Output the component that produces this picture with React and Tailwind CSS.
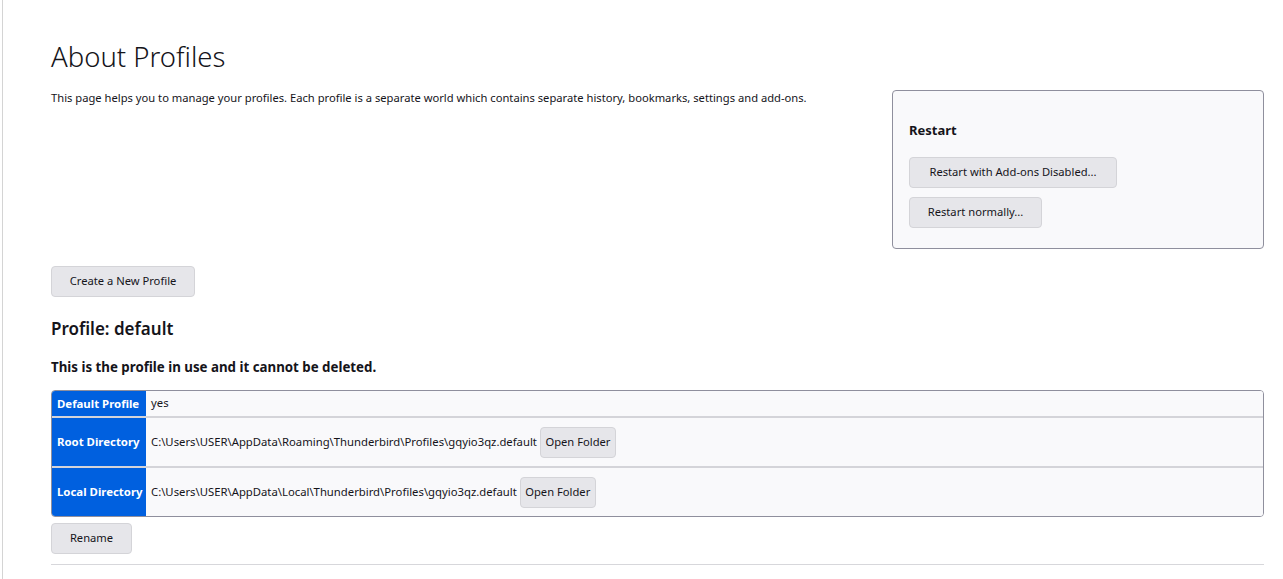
import React from "react";

const font = { fontFamily: '"Noto Sans", "Open Sans", sans-serif' };

function Btn({ children, className = "" }) {
  return (
    <button
      className={
        "flex items-center justify-center rounded-[4px] border border-[#d4d4d8] bg-[#e6e6ea] text-[11.2px] text-[#15141a] " +
        className
      }
    >
      {children}
    </button>
  );
}

function Row({ label, children, h }) {
  return (
    <div className={"flex " + h}>
      <div className="flex w-[94px] shrink-0 items-center bg-[#0060df] pl-[5px] text-[11.4px] font-bold text-white">
        {label}
      </div>
      <div className="flex flex-1 items-center bg-[#f9f9fb] pl-[5px] text-[11.3px] text-[#15141a]">
        {children}
      </div>
    </div>
  );
}

export default function App() {
  return (
    <div className="h-[579px] w-[1283px] overflow-hidden bg-white" style={font}>
      <div className="ml-[2px] h-full border-l border-[#d4d4d4] pl-[48px] pr-[19px] pt-[40px] text-[#15141a]">
        <h1 className="h-[34px] text-[27.5px] font-light leading-[34px]">About Profiles</h1>
        <div className="mt-[16px] flex items-start justify-between">
          <p className="text-[11.2px] leading-[16px]">
            This page helps you to manage your profiles. Each profile is a separate world which contains separate history, bookmarks, settings and add-ons.
          </p>
          <div className="h-[159px] w-[372px] shrink-0 rounded-[4px] border border-[#8f8f9d] bg-[#f9f9fb] pl-[16px] pt-[30px]">
            <div className="text-[13px] font-bold leading-[18px]">Restart</div>
            <Btn className="mt-[18px] h-[31px] w-[208px]">Restart with Add-ons Disabled...</Btn>
            <Btn className="mt-[9px] h-[31px] w-[133px]">Restart normally...</Btn>
          </div>
        </div>
        <Btn className="mt-[17px] h-[31px] w-[144px]">Create a New Profile</Btn>
        <h2 className="mt-[21px] text-[17px] font-semibold leading-[22px]">Profile: default</h2>
        <p className="mt-[18px] text-[13.3px] font-bold leading-[18px]">
          This is the profile in use and it cannot be deleted.
        </p>
        <div className="mt-[14px] overflow-hidden rounded-[4px] border border-[#8f8f9d]">
          <Row label="Default Profile" h="h-[25px]">yes</Row>
          <div className="h-[2px] bg-[#d4d4d9]" />
          <Row label="Root Directory" h="h-[48px]">
            <span>C:\Users\USER\AppData\Roaming\Thunderbird\Profiles\gqyio3qz.default</span>
            <Btn className="ml-[3px] h-[31px] w-[76px]">Open Folder</Btn>
          </Row>
          <div className="h-[2px] bg-[#d4d4d9]" />
          <Row label="Local Directory" h="h-[48px]">
            <span>C:\Users\USER\AppData\Local\Thunderbird\Profiles\gqyio3qz.default</span>
            <Btn className="ml-[3px] h-[31px] w-[76px]">Open Folder</Btn>
          </Row>
        </div>
        <Btn className="mt-[6px] h-[31px] w-[81px]">Rename</Btn>
        <div className="mt-[10px] h-px bg-[#d7d7db]" />
      </div>
    </div>
  );
}
